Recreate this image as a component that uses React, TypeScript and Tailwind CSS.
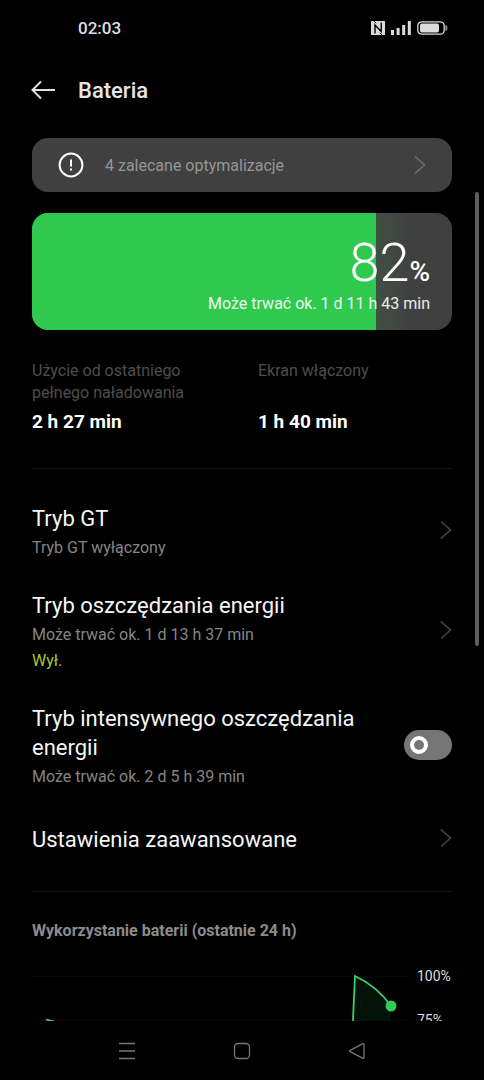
import { useState } from "react";

const LEVEL = 82;

function Chevron({ className }: { className: string }) {
  return (
    <svg viewBox="0 0 12 20" className={`h-5 w-3 shrink-0 ${className}`} fill="none" aria-hidden="true">
      <path d="M1 1.5 10.5 10 1 18.5" stroke="currentColor" strokeWidth="1.5" />
    </svg>
  );
}

function StatusBar() {
  return (
    <div className="flex h-14 shrink-0 items-center justify-between pr-9 pl-[78px]">
      <span className="text-[17px] leading-6 font-medium text-[#dedede]">02:03</span>
      <div className="flex items-center gap-1.5 text-[#dcdcdc]">
        {/* NFC */}
        <svg viewBox="0 0 14 14" className="h-3.5 w-3.5" aria-hidden="true">
          <rect width="14" height="14" rx=".6" fill="currentColor" />
          <path fill="none" stroke="#000" strokeWidth="1.4" d="M4 12.4V4l6.2 6.4V1.4" />
          <path fill="none" stroke="#000" strokeWidth="1" d="M2.8 0l2.4 2.2M11.2 14l-2.4-2.2" />
        </svg>
        {/* Signal */}
        <svg viewBox="0 0 20 14" className="h-3.5 w-5" fill="currentColor" aria-hidden="true">
          <rect x="0" y="9" width="3" height="5" />
          <rect x="5.6" y="7" width="3" height="7" />
          <rect x="11.2" y="4" width="3" height="10" />
          <rect x="16.8" y="0" width="3" height="14" />
        </svg>
        {/* Battery */}
        <svg viewBox="0 0 31 14" className="h-3.5 w-[31px]" aria-hidden="true">
          <rect x=".8" y=".8" width="26.4" height="12.4" rx="4" fill="none" stroke="currentColor" strokeWidth="1.3" />
          <rect x="3" y="2.6" width="19" height="8.8" rx="2" fill="currentColor" />
          <path d="M28.4 4.2h.6a1.4 1.4 0 0 1 1.4 1.4v2.8A1.4 1.4 0 0 1 29 9.8h-.6z" fill="#8a8a8a" />
        </svg>
      </div>
    </div>
  );
}

function Header() {
  return (
    <header className="flex h-[68px] shrink-0 items-center gap-[22px] pl-[31px]">
      <button type="button" aria-label="Wstecz" className="text-[#e2e2e2]">
        <svg viewBox="0 0 25 20" className="h-5 w-[25px]" fill="none" aria-hidden="true">
          <path d="M10 1.5 1.5 10l8.5 8.5M1.5 10H24" stroke="currentColor" strokeWidth="2" />
        </svg>
      </button>
      <h1 className="pt-0.5 text-[22px] leading-7 font-medium text-[#e6e6e6]">Bateria</h1>
    </header>
  );
}

function BatteryCard() {
  return (
    <section className="relative mt-[21px] flex h-[117px] overflow-hidden rounded-2xl bg-[#404040]">
      <div className="bg-[#30c950]" style={{ width: `${LEVEL}%` }} />
      <div className="w-9 bg-linear-to-r from-[#405043] to-[#404040]" />
      <div className="absolute inset-0 flex flex-col items-end justify-end pr-[22px] pb-[15px] text-white">
        <p className="flex items-baseline leading-[42px]">
          <span className="text-[54px] font-light">{LEVEL}</span>
          <span className="text-[28px] font-medium">%</span>
        </p>
        <p className="text-base leading-[22px] text-white/90">Może trwać ok. 1 d 11 h 43 min</p>
      </div>
    </section>
  );
}

function Stat({ label, value }: { label: string; value: string }) {
  return (
    <div className="flex flex-col justify-between gap-1.5">
      <dt className="max-w-[170px] text-base leading-[22px] text-[#4d4d4d]">{label}</dt>
      <dd className="text-[19px] leading-6 font-bold text-white">{value}</dd>
    </div>
  );
}

type RowTextProps = { title: string; note?: string; state?: string };

function RowText({ title, note, state }: RowTextProps) {
  return (
    <span className="block min-w-0 flex-1">
      <span className="block text-[22px] leading-[29px] text-[#f5f5f5]">{title}</span>
      {note && <span className="mt-1 block text-base leading-[22px] text-[#858585]">{note}</span>}
      {state && <span className="mt-1 block text-base leading-[22px] text-[#a3c73a]">{state}</span>}
    </span>
  );
}

function LinkRow(props: RowTextProps) {
  return (
    <li>
      <button type="button" className="flex min-h-[70px] w-full items-center gap-8 py-4 text-left">
        <RowText {...props} />
        <span className="pb-[3px]">
          <Chevron className="text-[#484848]" />
        </span>
      </button>
    </li>
  );
}

function SwitchRow(props: RowTextProps) {
  const [on, setOn] = useState(false);

  return (
    <li>
      <label className="flex items-center gap-8 py-4">
        <RowText {...props} />
        <input
          type="checkbox"
          role="switch"
          checked={on}
          onChange={(e) => setOn(e.target.checked)}
          className="peer sr-only"
        />
        <span className="mb-0.5 flex h-[30px] w-12 shrink-0 items-center rounded-full bg-[#757575] px-1.5 peer-checked:justify-end peer-checked:bg-[#30c950]">
          <span className="h-[18px] w-[18px] rounded-full border-4 border-white" />
        </span>
      </label>
    </li>
  );
}

function Divider() {
  return <hr className="border-t border-[#141414]" />;
}

function UsageChart() {
  return (
    <div className="mt-6 flex gap-[9px]">
      <svg viewBox="0 0 376 190" className="min-w-0 flex-1" fill="none" aria-hidden="true">
        <path d="M0 10.5h376M0 54.5h376M0 98.5h376M0 142.5h376" stroke="#080808" />
        <path d="M323 10C336 16 350 27 359 40V190H316z" fill="#03130a" />
        <path
          d="M14 53.5 24 56 90 90 180 130 316 170 321 54 323 10C336 16 350 27 359 40"
          stroke="#40cc66"
          strokeWidth="1.8"
        />
        <circle cx="359" cy="40" r="5.5" fill="#33cc55" />
      </svg>
      <div className="flex w-[35px] flex-col gap-6 text-sm leading-5 text-[#dedede]">
        <span>100%</span>
        <span>75%</span>
      </div>
    </div>
  );
}

function NavBar() {
  return (
    <nav className="flex h-[59px] shrink-0 items-center justify-center gap-[91px] text-[#767676]">
      <button type="button" aria-label="Ostatnie aplikacje">
        <svg viewBox="0 0 24 24" className="h-6 w-6" fill="none" stroke="currentColor" strokeWidth="1.3" aria-hidden="true">
          <path d="M4 4.5h16M4 12h16M4 19.5h16" />
        </svg>
      </button>
      <button type="button" aria-label="Ekran główny">
        <svg viewBox="0 0 24 24" className="h-6 w-6" fill="none" stroke="currentColor" strokeWidth="1.3" aria-hidden="true">
          <rect x="4.5" y="4.5" width="15" height="15" rx="3.5" />
        </svg>
      </button>
      <button type="button" aria-label="Cofnij">
        <svg viewBox="0 0 24 24" className="h-6 w-6" fill="none" stroke="currentColor" strokeWidth="1.3" strokeLinejoin="round" aria-hidden="true">
          <path d="M18 4.6 5.2 11.3q-1 .7 0 1.4L18 19.4q1 .3 1-.8V5.4q0-1.1-1-.8z" />
        </svg>
      </button>
    </nav>
  );
}

export default function App() {
  return (
    <div className="flex h-screen flex-col overflow-hidden bg-black font-[Roboto,'Noto_Sans',sans-serif]">
      <StatusBar />
      <Header />

      <main className="relative min-h-0 flex-1 overflow-hidden px-8 pt-3.5">
        <button
          type="button"
          className="flex h-[54px] w-full items-center rounded-2xl bg-[#404040] px-[26px] text-left"
        >
          <svg viewBox="0 0 26 26" className="h-[26px] w-[26px] shrink-0" fill="none" stroke="#fff" strokeWidth="2" aria-hidden="true">
            <circle cx="13" cy="13" r="11.4" />
            <path d="M13 7.4v7M13 16.4v2.2" />
          </svg>
          <span className="ml-[21px] flex-1 pt-0.5 text-base leading-[22px] text-[#969696]">
            4 zalecane optymalizacje
          </span>
          <Chevron className="text-[#6f6f6f]" />
        </button>

        <BatteryCard />

        <dl className="mt-[30px] mb-[34px] grid grid-cols-2 gap-8">
          <Stat label="Użycie od ostatniego pełnego naładowania" value="2 h 27 min" />
          <Stat label="Ekran włączony" value="1 h 40 min" />
        </dl>

        <Divider />

        <ul className="pt-[19px] pb-[17px]">
          <LinkRow title="Tryb GT" note="Tryb GT wyłączony" />
          <LinkRow title="Tryb oszczędzania energii" note="Może trwać ok. 1 d 13 h 37 min" state="Wył." />
          <SwitchRow title="Tryb intensywnego oszczędzania energii" note="Może trwać ok. 2 d 5 h 39 min" />
          <LinkRow title="Ustawienia zaawansowane" />
        </ul>

        <Divider />

        <h2 className="mt-7 text-base leading-[22px] font-bold text-[#8c8c8c]">
          Wykorzystanie baterii (ostatnie 24 h)
        </h2>
        <UsageChart />

        {/* Scroll thumb */}
        <div className="absolute top-[68px] right-[5px] h-[454px] w-1 rounded-full bg-[#5e5e5e]" />
      </main>

      <NavBar />
    </div>
  );
}
